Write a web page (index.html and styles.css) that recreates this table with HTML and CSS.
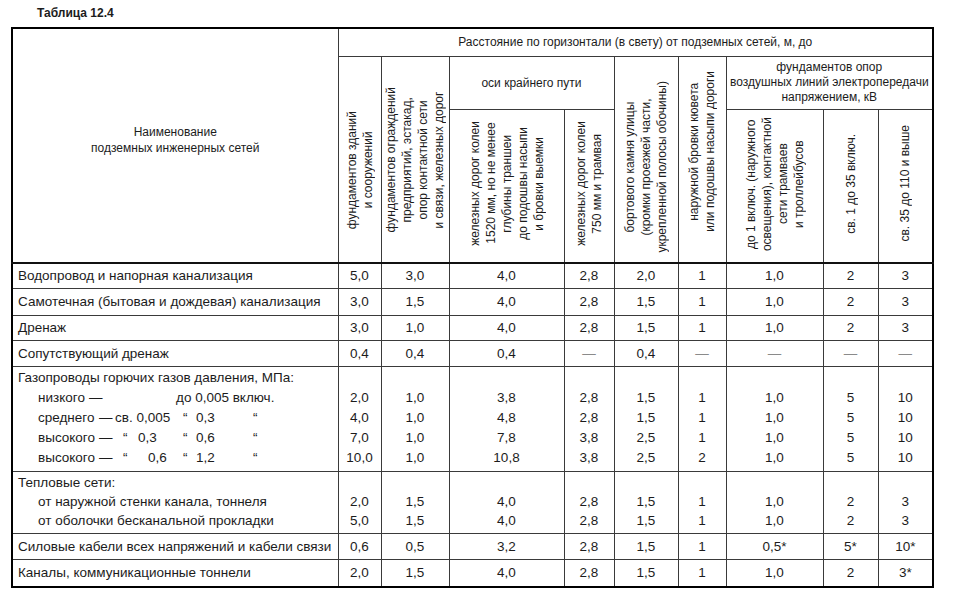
FILE: index.html
```html
<!DOCTYPE html>
<html lang="ru">
<head>
<meta charset="utf-8">
<title>Таблица 12.4</title>
<link rel="stylesheet" href="styles.css">
</head>
<body>
<div class="page">
  <div class="title">Таблица 12.4</div>
  <table class="norms">
    <colgroup>
      <col class="c0"><col class="c1"><col class="c2"><col class="c3"><col class="c4">
      <col class="c5"><col class="c6"><col class="c7"><col class="c8"><col class="c9">
    </colgroup>
    <thead>
      <tr class="h1">
        <th rowspan="3" class="name-head">Наименование<br>подземных инженерных сетей</th>
        <th colspan="9">Расстояние по горизонтали (в свету) от подземных сетей, м, до</th>
      </tr>
      <tr class="h2">
        <th rowspan="2" class="lower-a"><span class="vt">фундаментов зданий<br>и сооружений</span></th>
        <th rowspan="2" class="lower-b"><span class="vt">фундаментов ограждений<br>предприятий, эстакад,<br>опор контактной сети<br>и связи, железных дорог</span></th>
        <th colspan="2">оси крайнего пути</th>
        <th rowspan="2" class="lower-c"><span class="vt">бортового камня улицы<br>(кромки проезжей части,<br>укрепленной полосы обочины)</span></th>
        <th rowspan="2" class="upper"><span class="vt">наружной бровки кювета<br>или подошвы насыпи дороги</span></th>
        <th colspan="3" class="tight">фундаментов опор<br>воздушных линий электропередачи<br>напряжением, кВ</th>
      </tr>
      <tr class="h3">
        <th><span class="vt">железных дорог колеи<br>1520 мм, но не менее<br>глубины траншеи<br>до подошвы насыпи<br>и бровки выемки</span></th>
        <th><span class="vt">железных дорог колеи<br>750 мм и трамвая</span></th>
        <th><span class="vt">до 1 включ. (наружного<br>освещения), контактной<br>сети трамваев<br>и троллейбусов</span></th>
        <th><span class="vt">св. 1 до 35 включ.</span></th>
        <th><span class="vt">св. 35 до 110 и выше</span></th>
      </tr>
    </thead>
    <tbody>
      <tr class="r25">
        <td class="label">Водопровод и напорная канализация</td>
        <td>5,0</td><td>3,0</td><td>4,0</td><td>2,8</td><td>2,0</td><td>1</td><td>1,0</td><td>2</td><td>3</td>
      </tr>
      <tr class="r27">
        <td class="label">Самотечная (бытовая и дождевая) канализация</td>
        <td>3,0</td><td>1,5</td><td>4,0</td><td>2,8</td><td>1,5</td><td>1</td><td>1,0</td><td>2</td><td>3</td>
      </tr>
      <tr class="r25">
        <td class="label">Дренаж</td>
        <td>3,0</td><td>1,0</td><td>4,0</td><td>2,8</td><td>1,5</td><td>1</td><td>1,0</td><td>2</td><td>3</td>
      </tr>
      <tr class="r26">
        <td class="label">Сопутствующий дренаж</td>
        <td>0,4</td><td>0,4</td><td>0,4</td><td class="nil">—</td><td>0,4</td><td class="nil">—</td><td class="nil">—</td><td class="nil">—</td><td class="nil">—</td>
      </tr>
      <tr class="r-gas multi">
        <td class="label">
          <div>Газопроводы горючих газов давления, МПа:</div>
          <div class="gas"><span>низкого</span><span class="dash low">—</span><span class="g-wide">до 0,005 включ.</span></div>
          <div class="gas"><span>среднего</span><span class="dash">—</span><span class="g-from">св. 0,005</span><span class="q2">“</span><span>0,3</span><span class="q3">“</span></div>
          <div class="gas"><span>высокого</span><span class="dash">—</span><span class="q1">“</span><span class="v1">0,3</span><span class="q2">“</span><span>0,6</span><span class="q3">“</span></div>
          <div class="gas"><span>высокого</span><span class="dash">—</span><span class="q1">“</span><span class="v1 far">0,6</span><span class="q2">“</span><span>1,2</span><span class="q3">“</span></div>
        </td>
        <td><br>2,0<br>4,0<br>7,0<br>10,0</td>
        <td><br>1,0<br>1,0<br>1,0<br>1,0</td>
        <td><br>3,8<br>4,8<br>7,8<br>10,8</td>
        <td><br>2,8<br>2,8<br>3,8<br>3,8</td>
        <td><br>1,5<br>1,5<br>2,5<br>2,5</td>
        <td><br>1<br>1<br>1<br>2</td>
        <td><br>1,0<br>1,0<br>1,0<br>1,0</td>
        <td><br>5<br>5<br>5<br>5</td>
        <td><br>10<br>10<br>10<br>10</td>
      </tr>
      <tr class="r-heat multi">
        <td class="label">
          <div>Тепловые сети:</div>
          <div class="indent">от наружной стенки канала, тоннеля</div>
          <div class="indent">от оболочки бесканальной прокладки</div>
        </td>
        <td><br>2,0<br>5,0</td>
        <td><br>1,5<br>1,5</td>
        <td><br>4,0<br>4,0</td>
        <td><br>2,8<br>2,8</td>
        <td><br>1,5<br>1,5</td>
        <td><br>1<br>1</td>
        <td><br>1,0<br>1,0</td>
        <td><br>2<br>2</td>
        <td><br>3<br>3</td>
      </tr>
      <tr class="r26">
        <td class="label">Силовые кабели всех напряжений и кабели связи</td>
        <td>0,6</td><td>0,5</td><td>3,2</td><td>2,8</td><td>1,5</td><td>1</td><td>0,5*</td><td>5*</td><td>10*</td>
      </tr>
      <tr class="r28">
        <td class="label">Каналы, коммуникационные тоннели</td>
        <td>2,0</td><td>1,5</td><td>4,0</td><td>2,8</td><td>1,5</td><td>1</td><td>1,0</td><td>2</td><td>3*</td>
      </tr>
    </tbody>
  </table>
</div>
</body>
</html>
```

FILE: styles.css
```css
* { box-sizing: border-box; }
html, body { margin: 0; padding: 0; background: #fff; }
body {
  font-family: "Liberation Sans", Arial, sans-serif;
  color: #1c1c1c;
}
.page {
  width: 960px;
  height: 606px;
  overflow: hidden;
  padding: 6px 0 0 11px;
}
.title {
  font-weight: bold;
  font-size: 12px;
  line-height: 15px;
  margin: 0 0 6px 26px;
}
.norms {
  border-collapse: collapse;
  table-layout: fixed;
  width: 922px;
  border: 2px solid #000;
  font-size: 13.5px;
}
.c0 { width: 326px; }
.c1 { width: 43px; }
.c2 { width: 68px; }
.c3 { width: 115px; }
.c4 { width: 50px; }
.c5 { width: 64px; }
.c6 { width: 48px; }
.c7 { width: 97px; }
.c8 { width: 55px; }
.c9 { width: 55px; }

.norms th, .norms td {
  border: 1px solid #3a3a3a;
  padding: 0;
}
.norms th {
  font-weight: normal;
  font-size: 12px;
  line-height: 16px;
  text-align: center;
  vertical-align: middle;
}
.norms th.tight { line-height: 15px; }
.h1 { height: 28px; }
.h2 { height: 53px; }
.h3 { height: 154px; }
.norms th.name-head { padding-bottom: 12px; }
.norms th.lower-a { padding-top: 25px; }
.norms th.lower-b { padding-top: 5px; }
.norms th.lower-c { padding-top: 20px; }
.norms th.upper { padding-bottom: 12px; }

.vt {
  display: inline-block;
  writing-mode: vertical-rl;
  transform: rotate(180deg);
  white-space: nowrap;
  text-align: center;
  line-height: 16px;
}

.norms td {
  text-align: center;
  vertical-align: middle;
  white-space: nowrap;
}
.norms tbody tr:first-child td { border-top: 2px solid #111; }
.norms td.label {
  text-align: left;
  padding-left: 5px;
}
.r25 { height: 25px; }
.r26 { height: 26px; }
.r27 { height: 27px; }
.r28 { height: 28px; }
.r-gas { height: 105px; }
.r-heat { height: 62px; }

.multi td {
  vertical-align: top;
  line-height: 20px;
}
.norms .r-gas td { padding-top: 1px; }
.norms .r-heat td { line-height: 19px; padding-top: 1px; }

.nil { color: #8a8a8a; }

.gas {
  display: grid;
  grid-template-columns: 61px 15px 22px 40px 20px 57px auto;
  padding-left: 20px;
}
.gas .dash { grid-column: 2; }
.gas .dash.low { margin-left: -10px; }
.gas .g-wide { grid-column: 5 / 8; }
.gas .g-from { grid-column: 3 / 5; padding-left: 1px; }
.gas .q1 { grid-column: 3; padding-left: 9px; }
.gas .v1 { grid-column: 4; padding-left: 2px; }
.gas .v1.far { padding-left: 12px; }
.gas .q2 { grid-column: 5; padding-left: 7px; }
.gas .q3 { grid-column: 7; }
.indent { padding-left: 20px; }
```
